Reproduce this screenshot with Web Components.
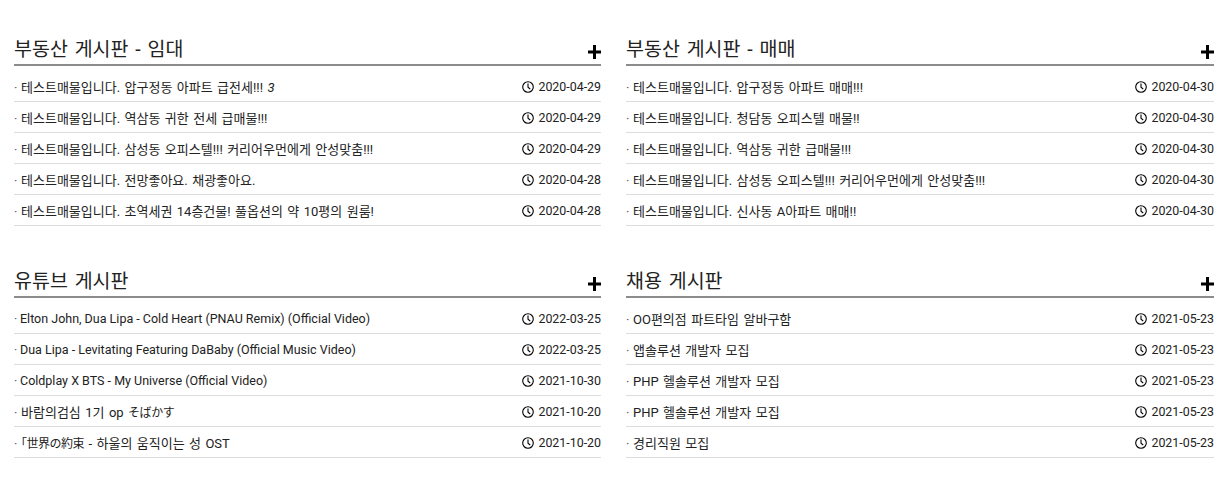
<!DOCTYPE html>
<html lang="ko">
<head>
<meta charset="utf-8">
<title>게시판</title>
<style>
  html, body { margin: 0; background: #fff; }
  body { font-family: Roboto, "Noto Sans CJK KR", sans-serif; color: #000; }
  .ja { font-family: "Noto Sans CJK JP", sans-serif; font-size: 12px; letter-spacing: -.5px; }
  .bracket { font-feature-settings: "halt"; }
</style>
</head>
<body>
<board-grid>
  <board-panel title="부동산 게시판 - 임대">
    <board-row date="2020-04-29">테스트매물입니다. 압구정동 아파트 급전세!!! <i>3</i></board-row>
    <board-row date="2020-04-29">테스트매물입니다. 역삼동 귀한 전세 급매물!!!</board-row>
    <board-row date="2020-04-29">테스트매물입니다. 삼성동 오피스텔!!! 커리어우먼에게 안성맞춤!!!</board-row>
    <board-row date="2020-04-28">테스트매물입니다. 전망좋아요. 채광좋아요.</board-row>
    <board-row date="2020-04-28">테스트매물입니다. 초역세권 14층건물! 풀옵션의 약 10평의 원룸!</board-row>
  </board-panel>
  <board-panel title="부동산 게시판 - 매매">
    <board-row date="2020-04-30">테스트매물입니다. 압구정동 아파트 매매!!!</board-row>
    <board-row date="2020-04-30">테스트매물입니다. 청담동 오피스텔 매물!!</board-row>
    <board-row date="2020-04-30">테스트매물입니다. 역삼동 귀한 급매물!!!</board-row>
    <board-row date="2020-04-30">테스트매물입니다. 삼성동 오피스텔!!! 커리어우먼에게 안성맞춤!!!</board-row>
    <board-row date="2020-04-30">테스트매물입니다. 신사동 A아파트 매매!!</board-row>
  </board-panel>
  <board-panel title="유튜브 게시판">
    <board-row latin date="2022-03-25">Elton John, Dua Lipa - Cold Heart (PNAU Remix) (Official Video)</board-row>
    <board-row latin date="2022-03-25">Dua Lipa - Levitating Featuring DaBaby (Official Music Video)</board-row>
    <board-row latin date="2021-10-30">Coldplay X BTS - My Universe (Official Video)</board-row>
    <board-row date="2021-10-20">바람의검심 1기 op <span class="ja">そばかす</span></board-row>
    <board-row date="2021-10-20"><span class="ja bracket">「世界の約束</span> - 하울의 움직이는 성 OST</board-row>
  </board-panel>
  <board-panel title="채용 게시판">
    <board-row date="2021-05-23">OO편의점 파트타임 알바구함</board-row>
    <board-row date="2021-05-23">앱솔루션 개발자 모집</board-row>
    <board-row date="2021-05-23">PHP 헬솔루션 개발자 모집</board-row>
    <board-row date="2021-05-23">PHP 헬솔루션 개발자 모집</board-row>
    <board-row date="2021-05-23">경리직원 모집</board-row>
  </board-panel>
</board-grid>

<script>
class BoardGrid extends HTMLElement {
  constructor() {
    super();
    this.attachShadow({mode: 'open'}).innerHTML = `
    <style>
      :host {
        display: grid;
        grid-template-columns: 587px 588px;
        column-gap: 25px;
        row-gap: 40px;
        padding: 34px 15px 0 14px;
      }
    </style>
    <slot></slot>`;
  }
}
customElements.define('board-grid', BoardGrid);

class BoardPanel extends HTMLElement {
  constructor() {
    super();
    this.attachShadow({mode: 'open'});
  }
  connectedCallback() {
    this.shadowRoot.innerHTML = `
    <style>
      :host { display: block; }
      header {
        display: flex;
        justify-content: space-between;
        align-items: flex-end;
        height: 30px;
        margin-bottom: 5px;
        border-bottom: 2px solid #8c8c8c;
      }
      h2 { margin: 0; font-size: 19.5px; font-weight: 400; word-spacing: 2px; line-height: 28px; color: #222; }
      svg { display: block; margin-bottom: 5px; }
    </style>
    <header>
      <h2>${this.getAttribute('title')}</h2>
      <svg width="13" height="14" viewBox="0 0 13 14"><path d="M5 0h3v5.5h5v3H8V14H5V8.5H0v-3h5z" fill="#000"/></svg>
    </header>
    <slot></slot>`;
  }
}
customElements.define('board-panel', BoardPanel);

class BoardRow extends HTMLElement {
  constructor() {
    super();
    this.attachShadow({mode: 'open'});
  }
  connectedCallback() {
    this.shadowRoot.innerHTML = `
    <style>
      :host {
        display: flex;
        justify-content: space-between;
        align-items: center;
        height: 30px;
        border-bottom: 1px solid #ddd;
        font-size: 13px;
        color: #222;
      }
      :host([latin]) { font-size: 12.5px; }
      .title { white-space: nowrap; word-spacing: 1.2px; }
      :host([latin]) .title { word-spacing: 0; padding-top: 1px; }
      .title::before { content: "·"; display: inline-block; width: 7px; color: #555; }
      :host([latin]) .title::before { width: 6px; }
      .date { display: flex; align-items: center; gap: 4px; font-size: 12.4px; padding-top: 1px; }
      svg { display: block; }
    </style>
    <span class="title"><slot></slot></span>
    <span class="date">
      <svg width="12" height="12" viewBox="0 0 12 12" fill="none" stroke="#000" stroke-width="1.1"><circle cx="6" cy="6" r="5.3"/><path d="M6 2.6V6.2L8.2 8"/></svg>
      ${this.getAttribute('date')}
    </span>`;
  }
}
customElements.define('board-row', BoardRow);
</script>
</body>
</html>
